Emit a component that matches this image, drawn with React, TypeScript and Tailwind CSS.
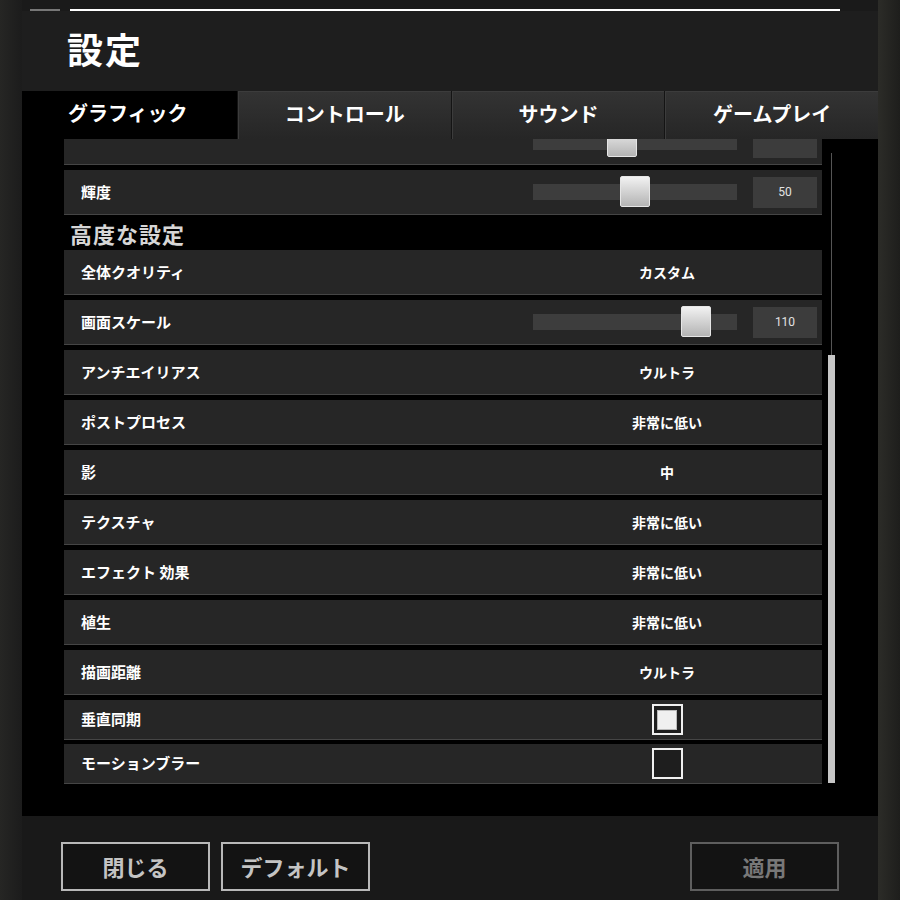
import React from "react";

type Row =
  | { kind: "value"; label: string; value: string }
  | { kind: "slider"; label: string; value: string; pos: number }
  | { kind: "check"; label: string; checked: boolean };

const ADVANCED: Row[] = [
  { kind: "value", label: "全体クオリティ", value: "カスタム" },
  { kind: "slider", label: "画面スケール", value: "110", pos: 0.85 },
  { kind: "value", label: "アンチエイリアス", value: "ウルトラ" },
  { kind: "value", label: "ポストプロセス", value: "非常に低い" },
  { kind: "value", label: "影", value: "中" },
  { kind: "value", label: "テクスチャ", value: "非常に低い" },
  { kind: "value", label: "エフェクト 効果", value: "非常に低い" },
  { kind: "value", label: "植生", value: "非常に低い" },
  { kind: "value", label: "描画距離", value: "ウルトラ" },
  { kind: "check", label: "垂直同期", checked: true },
  { kind: "check", label: "モーションブラー", checked: false },
];

const TABS = ["コントロール", "サウンド", "ゲームプレイ"];

function Slider({ value, pos }: { value: string; pos: number }) {
  return (
    <div className="flex w-[289px] items-center">
      <div className="relative h-[16px] w-[204px] bg-[#3d3d3d]">
        <div
          className="absolute top-[-8px] h-[31px] w-[30px] rounded-[2px] border border-[#e6e6e6] bg-gradient-to-b from-[#f2f2f2] to-[#b4b4b4]"
          style={{ left: `${pos * 174}px` }}
        />
      </div>
      <div className="ml-[16px] flex h-[31px] w-[64px] items-center justify-center bg-[#3c3c3c] font-['Roboto',sans-serif] text-[12px] text-[#e2e2e2]">
        {value}
      </div>
    </div>
  );
}

function SettingRow({ row }: { row: Row }) {
  const check = row.kind === "check";
  return (
    <div
      className={`flex items-center border-b border-[#454545] bg-[#262626] ${
        check ? "h-[40px]" : "h-[45px]"
      }`}
    >
      <div className="flex-1 pl-[17px] text-[15px] font-bold text-white">
        {row.label}
      </div>
      {row.kind === "slider" && <Slider value={row.value} pos={row.pos} />}
      {row.kind === "value" && (
        <div className="w-[289px]">
          <div className="w-[268px] text-center text-[14px] font-bold text-white">
            {row.value}
          </div>
        </div>
      )}
      {row.kind === "check" && (
        <div className="w-[289px]">
          <div className="flex w-[268px] justify-center">
            <div className="flex h-[31px] w-[31px] items-center justify-center border-2 border-[#f0f0f0] bg-[#1e1e1e]">
              {row.checked && (
                <div className="h-[20px] w-[20px] border border-[#bbb] bg-[#f0f0f0]" />
              )}
            </div>
          </div>
        </div>
      )}
    </div>
  );
}

function Button({ label, disabled }: { label: string; disabled?: boolean }) {
  return (
    <div
      className={`flex h-[49px] w-[149px] items-center justify-center border-2 bg-[#131313] text-[22px] font-bold ${
        disabled
          ? "border-[#5e5e5e] text-[#787878]"
          : "border-[#b8b8b8] text-[#c4c4c4]"
      }`}
    >
      {label}
    </div>
  );
}

export default function App() {
  return (
    <div className="flex h-[900px] w-[900px] overflow-hidden bg-[#1a1a1a] font-['Noto_Sans_CJK_JP','Noto_Sans',sans-serif]">
      <div className="w-[22px] bg-gradient-to-r from-[#262624] to-[#1c1c1c]" />
      <div className="flex w-[856px] flex-col">
        {/* top strip */}
        <div className="h-[9px] bg-[#1a1a1a]" />
        <div className="flex h-[2px] bg-[#1a1a1a]">
          <div className="ml-[8px] w-[30px] bg-[#777]" />
          <div className="ml-[10px] w-[770px] bg-white" />
        </div>

        {/* header */}
        <div className="flex h-[80px] items-center bg-[#1e1e1e] pb-[6px] pl-[45px]">
          <span className="text-[36px] font-bold tracking-[2px] text-white">設定</span>
        </div>

        {/* tabs */}
        <div className="flex h-[48px] bg-[#141414]">
          <div className="flex w-[215px] items-center bg-black pb-[4px] pl-[46px] text-[20px] font-bold text-white">
            グラフィック
          </div>
          {TABS.map((t) => (
            <div
              key={t}
              className="ml-[1px] flex flex-1 items-center justify-center border-t border-l border-[#3c3c3c] bg-gradient-to-b from-[#333333] to-[#262626] pb-[4px] text-[20px] font-bold text-white"
            >
              {t}
            </div>
          ))}
        </div>

        {/* content */}
        <div className="flex h-[677px] overflow-hidden bg-black pl-[42px]">
          <div className="flex w-[758px] flex-col gap-[5px]">
            <div className="-mt-[19px] flex h-[45px] items-center border-b border-[#454545] bg-[#262626]">
              <div className="flex-1" />
              <Slider value="" pos={0.425} />
            </div>
            <SettingRow row={{ kind: "slider", label: "輝度", value: "50", pos: 0.5 }} />
            <div className="-my-[5px] flex h-[35px] items-center pl-[6px] pt-[1px] text-[22px] font-bold tracking-[1px] text-[#d6d6d6]">
              高度な設定
            </div>
            {ADVANCED.map((r, i) => (
              <div key={r.label} className={i === 10 ? "-mt-[1px]" : ""}>
                <SettingRow row={r} />
              </div>
            ))}
          </div>
          <div className="ml-[6px] flex w-[7px] flex-col items-center pt-[14px]">
            <div className="h-[202px] w-[1px] bg-[#555]" />
            <div className="h-[428px] w-[7px] bg-[#c6c6c6]" />
          </div>
        </div>

        {/* footer */}
        <div className="flex flex-1 items-start bg-[#191919] px-[39px] pt-[26px]">
          <div className="flex gap-[11px]">
            <Button label="閉じる" />
            <Button label="デフォルト" />
          </div>
          <div className="flex-1" />
          <Button label="適用" disabled />
        </div>
      </div>
      <div className="w-[22px] bg-gradient-to-r from-[#2c2c28] to-[#1e1e1c]" />
    </div>
  );
}
